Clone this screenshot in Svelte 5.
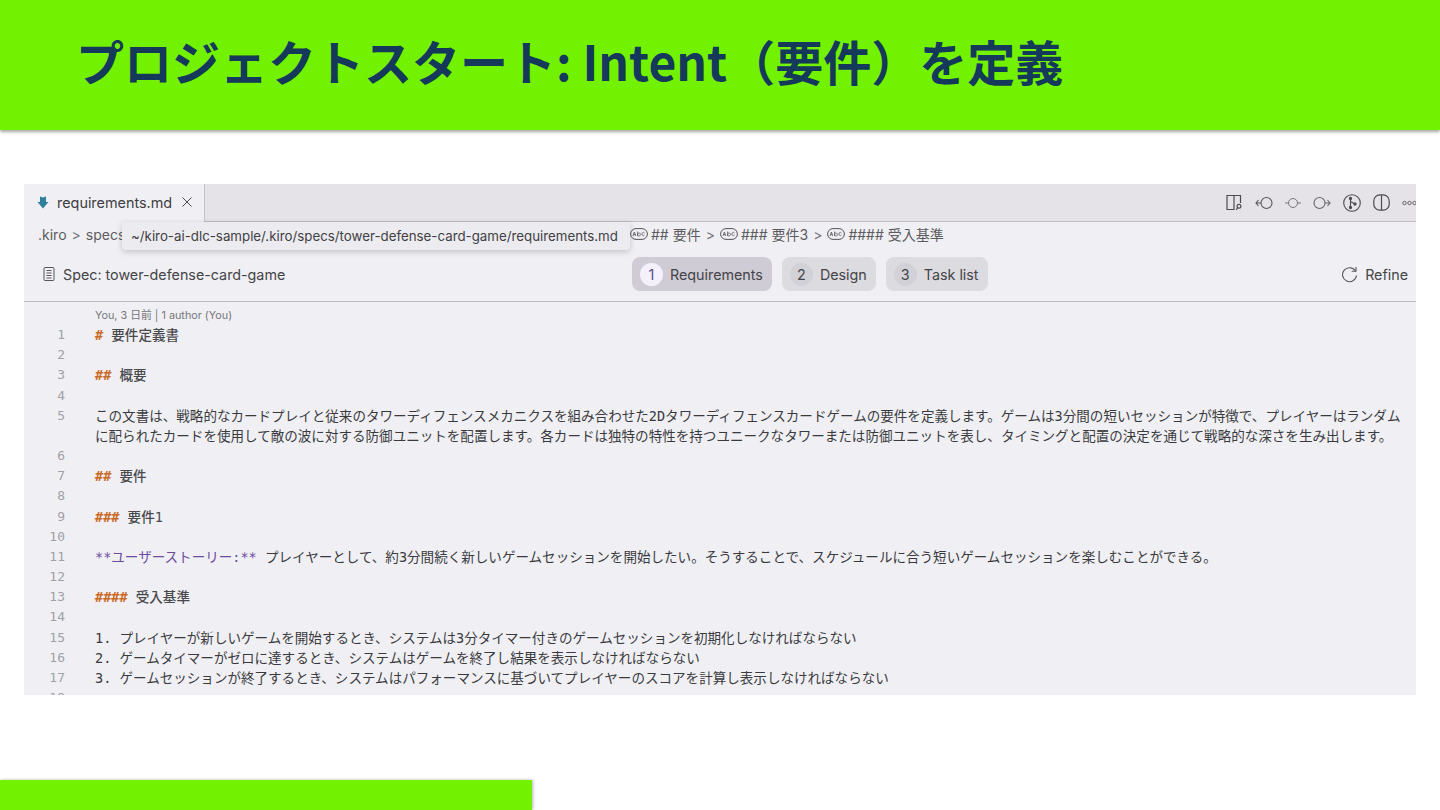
<script lang="ts">
  // Slide: Kiro spec editor screenshot under a green title band.
  type Part = { t: string; c?: string };
  interface Row {
    n: number | null;
    parts: Part[];
  }

  const plain = (t: string): Part[] => [{ t }];
  const head = (mark: string, t: string): Part[] => [
    { t: mark, c: 'mark' },
    { t: ' ' + t, c: 'head' }
  ];

  const rows: Row[] = [
    { n: 1, parts: head('#', '要件定義書') },
    { n: 2, parts: [] },
    { n: 3, parts: head('##', '概要') },
    { n: 4, parts: [] },
    {
      n: 5,
      parts: plain(
        'この文書は、戦略的なカードプレイと従来のタワーディフェンスメカニクスを組み合わせた2Dタワーディフェンスカードゲームの要件を定義します。ゲームは3分間の短いセッションが特徴で、プレイヤーはランダム'
      )
    },
    {
      n: null,
      parts: plain(
        'に配られたカードを使用して敵の波に対する防御ユニットを配置します。各カードは独特の特性を持つユニークなタワーまたは防御ユニットを表し、タイミングと配置の決定を通じて戦略的な深さを生み出します。'
      )
    },
    { n: 6, parts: [] },
    { n: 7, parts: head('##', '要件') },
    { n: 8, parts: [] },
    { n: 9, parts: head('###', '要件1') },
    { n: 10, parts: [] },
    {
      n: 11,
      parts: [
        { t: '**ユーザーストーリー:**', c: 'story' },
        { t: ' プレイヤーとして、約3分間続く新しいゲームセッションを開始したい。そうすることで、スケジュールに合う短いゲームセッションを楽しむことができる。' }
      ]
    },
    { n: 12, parts: [] },
    { n: 13, parts: head('####', '受入基準') },
    { n: 14, parts: [] },
    { n: 15, parts: plain('1. プレイヤーが新しいゲームを開始するとき、システムは3分タイマー付きのゲームセッションを初期化しなければならない') },
    { n: 16, parts: plain('2. ゲームタイマーがゼロに達するとき、システムはゲームを終了し結果を表示しなければならない') },
    { n: 17, parts: plain('3. ゲームセッションが終了するとき、システムはパフォーマンスに基づいてプレイヤーのスコアを計算し表示しなければならない') },
    { n: 18, parts: [] }
  ];

  const steps = [
    { n: 1, label: 'Requirements', active: true },
    { n: 2, label: 'Design', active: false },
    { n: 3, label: 'Task list', active: false }
  ];
</script>

{#snippet abc()}
  <svg class="abc" viewBox="0 0 18 12" width="18" height="12" fill="none" stroke="#55555a" stroke-width="1">
    <rect x="0.600" y="0.600" width="16.800" height="10.800" rx="5.400" />
    <path d="M3 8l1.400-4L5.800 8M3.600 6.600h1.600M7.600 3.500V8M7.600 6.400a1.400 1.500 0 1 1 0 .2M14.500 5a1.500 1.600 0 1 0 0 2" stroke-width="0.800" />
  </svg>
{/snippet}

<div class="slide">
  <header class="band">
    <h1>プロジェクトスタート: Intent（要件）を定義</h1>
  </header>

  <section class="window">
    <div class="tabs">
      <div class="tab">
        <svg viewBox="0 0 12 13" width="12" height="13" fill="#2f7f9c">
          <path d="M3 0.500L6 1.500 9 0.500V6H11.500L6 12.500 0.500 6H3z" />
        </svg>
        <span>requirements.md</span>
        <svg class="close" viewBox="0 0 10 10" width="10" height="10" stroke="#4a4a4e" stroke-width="1" fill="none">
          <path d="M0.500 0.500l9 9M9.500 0.500l-9 9" />
        </svg>
      </div>
      <div class="actions">
        <svg viewBox="0 0 17 17" width="17" height="17" fill="none" stroke="#4c4c50" stroke-width="1.200">
          <path d="M8.500 15.500H1V1.500h13.500V9M8 1.500v14" />
          <circle cx="13" cy="12.200" r="1.900" />
          <path d="M11.700 13.700L10.300 15.800" />
        </svg>
        <svg viewBox="0 0 18 14" width="18" height="14" fill="none" stroke="#55555a" stroke-width="1.100">
          <circle cx="11.500" cy="7" r="5.500" />
          <path d="M6 7H1M3.500 4L1 7l2.500 3" />
        </svg>
        <svg viewBox="0 0 16 14" width="16" height="14" fill="none" stroke="#77777c" stroke-width="1">
          <circle cx="8" cy="7" r="4.500" />
          <path d="M3.500 7H0M12.500 7H16" />
        </svg>
        <svg viewBox="0 0 18 14" width="18" height="14" fill="none" stroke="#66666b" stroke-width="1.100">
          <circle cx="6.500" cy="7" r="5.500" />
          <path d="M12 7h5M14.500 4L17 7l-2.500 3" />
        </svg>
        <svg viewBox="0 0 18 18" width="18" height="18" fill="none" stroke="#4c4c50" stroke-width="1.100">
          <circle cx="9" cy="9" r="8.300" />
          <path d="M7.500 4.500v9M7.500 7.500l4.500 2.500" />
          <circle cx="7.500" cy="4.500" r="1.100" fill="#4c4c50" />
          <circle cx="7.500" cy="13.500" r="1.100" fill="#4c4c50" />
          <circle cx="12" cy="10" r="1.100" fill="#4c4c50" />
        </svg>
        <svg viewBox="0 0 17 17" width="17" height="17" fill="none" stroke="#4c4c50" stroke-width="1.200">
          <rect x="0.800" y="0.800" width="15.400" height="15.400" rx="6" />
          <path d="M8.500 0.800v15.400" />
        </svg>
        <svg viewBox="0 0 15 6" width="15" height="6" fill="none" stroke="#66666b" stroke-width="1">
          <circle cx="2.500" cy="3" r="1.700" />
          <circle cx="7.500" cy="3" r="1.700" />
          <circle cx="12.500" cy="3" r="1.700" />
        </svg>
      </div>
    </div>

    <div class="crumbs">
      <div class="crumbs-start">.kiro<i>&gt;</i>specs</div>
      <div class="crumbs-end">
        {@render abc()}<span>## 要件</span><i>&gt;</i>
        {@render abc()}<span>### 要件3</span><i>&gt;</i>
        {@render abc()}<span>#### 受入基準</span>
      </div>
      <div class="tooltip">~/kiro-ai-dlc-sample/.kiro/specs/tower-defense-card-game/requirements.md</div>
    </div>

    <div class="specbar">
      <div class="spec-name">
        <svg viewBox="0 0 12 14" width="12" height="14" fill="none" stroke="#55555a" stroke-width="1">
          <rect x="1" y="0.500" width="10" height="13" rx="1" />
          <path d="M3.500 3.500h5M3.500 6h5M3.500 8.500h5M3.500 11h5" />
        </svg>
        <span>Spec: tower-defense-card-game</span>
      </div>
      <div class="steps">
        {#each steps as s}
          <div class="step" class:active={s.active}>
            <span class="num">{s.n}</span>
            <span>{s.label}</span>
          </div>
        {/each}
      </div>
      <div class="refine">
        <svg viewBox="0 0 17 17" width="17" height="17" fill="none" stroke="#55555a" stroke-width="1.100">
          <path d="M14.500 5A7 7 0 1 0 15.500 9.500" />
          <path d="M15 1V5.300H10.700" />
        </svg>
        <span>Refine</span>
      </div>
    </div>

    <div class="editor">
      <div class="lens">You, 3 日前 | 1 author (You)</div>
      {#each rows as row}
        <div class="row">
          <span class="ln">{row.n ?? ''}</span>
          <span class="code">{#each row.parts as p}<span class={p.c}>{p.t}</span>{/each}</span>
        </div>
      {/each}
    </div>
  </section>

  <div class="foot"></div>
</div>

<style>
  :global(body) {
    margin: 0;
    background: #fff;
  }
  .slide {
    width: 1440px;
    height: 810px;
    display: flex;
    flex-direction: column;
    overflow: hidden;
    background: #fff;
  }
  .band {
    height: 130px;
    flex: none;
    background: #72f100;
    box-shadow: 0 2px 3px rgba(0, 0, 0, 0.35);
    display: flex;
    align-items: center;
    padding-left: 76px;
  }
  h1 {
    margin: 0 0 10px;
    font: 700 48px 'Noto Sans CJK JP', sans-serif;
    color: #14395b;
    white-space: nowrap;
  }
  .window {
    margin: 54px 24px 0;
    height: 511px;
    flex: none;
    overflow: hidden;
    background: #f0f0f4;
    display: flex;
    flex-direction: column;
    font-family: Inter, 'Noto Sans CJK JP', sans-serif;
    color: #444448;
  }
  .tabs {
    height: 38px;
    flex: none;
    display: flex;
    justify-content: space-between;
    background: #e5e3e8;
    border-bottom: 1px solid #bdbcc0;
    box-sizing: border-box;
  }
  .tab {
    width: 181px;
    height: 38px;
    box-sizing: border-box;
    background: #f0f0f4;
    border-right: 1px solid #c4c3c8;
    display: flex;
    align-items: center;
    padding: 0 0 2px 13px;
    gap: 8px;
    font-size: 14.400px;
    color: #3d3d42;
  }
  .close {
    margin-left: 2px;
  }
  .actions {
    display: flex;
    align-items: center;
    gap: 12px;
    width: 190px;
    overflow: hidden;
    flex: none;
  }
  .actions svg {
    flex: none;
  }
  .crumbs {
    position: relative;
    height: 26px;
    flex: none;
    box-sizing: border-box;
    padding-bottom: 2px;
    display: flex;
    align-items: center;
    font-size: 14px;
    color: #5c5c60;
  }
  .crumbs i {
    font-style: normal;
    margin: 0 5px;
    color: #77777b;
  }
  .crumbs-start {
    width: 592px;
    padding-left: 14px;
    box-sizing: border-box;
    flex: none;
    white-space: nowrap;
  }
  .crumbs-end {
    display: flex;
    align-items: center;
    white-space: nowrap;
    margin-left: 14px;
  }
  .abc {
    margin-right: 3px;
    flex: none;
  }
  .tooltip {
    position: absolute;
    left: 98px;
    top: 0;
    width: 508px;
    height: 28px;
    box-sizing: border-box;
    padding-left: 9px;
    display: flex;
    align-items: center;
    background: #ecebef;
    border-radius: 0 0 4px 4px;
    box-shadow: 0 2px 6px rgba(0, 0, 0, 0.18);
    font-size: 13.300px;
    color: #3f3f44;
    white-space: nowrap;
  }
  .specbar {
    height: 54px;
    flex: none;
    box-sizing: border-box;
    border-bottom: 1px solid #bdbcc0;
    display: flex;
    align-items: center;
    font-size: 14.300px;
    padding: 0 8px 1px 0;
  }
  .spec-name {
    width: 608px;
    flex: none;
    box-sizing: border-box;
    padding-left: 19px;
    display: flex;
    align-items: center;
    gap: 8px;
  }
  .steps {
    display: flex;
    gap: 10px;
  }
  .step {
    height: 34px;
    display: flex;
    align-items: center;
    gap: 7px;
    padding: 0 9px 0 8px;
    border-radius: 8px;
    background: #dcdbe0;
  }
  .step.active {
    background: #cfccd5;
  }
  .num {
    width: 23px;
    height: 23px;
    border-radius: 50%;
    background: #d2d1d7;
    display: flex;
    align-items: center;
    justify-content: center;
  }
  .active .num {
    background: #f5f1fc;
    color: #5b4a8a;
  }
  .refine {
    margin-left: auto;
    display: flex;
    align-items: center;
    gap: 7px;
  }
  .editor {
    flex: 1;
    min-height: 0;
    overflow: hidden;
    padding-top: 7px;
    font-family: 'DejaVu Sans Mono', 'Noto Sans CJK JP', monospace;
  }
  .lens {
    height: 16px;
    padding-left: 71px;
    font: 10.800px/14px Inter, 'Noto Sans CJK JP', sans-serif;
    color: #77777b;
  }
  .row {
    display: flex;
    height: 20.180px;
    line-height: 20.180px;
    font-size: 13.550px;
    white-space: nowrap;
  }
  .ln {
    width: 41px;
    flex: none;
    text-align: right;
    font-size: 13px;
    color: #a0a0a5;
  }
  .code {
    margin-left: 30px;
    color: #3a3a3e;
  }
  .mark {
    color: #c96a26;
    font-style: italic;
    font-weight: 700;
  }
  .head {
    font-weight: 500;
    color: #4a4a4e;
  }
  .story {
    color: #6a4b9c;
  }
  .foot {
    margin-top: auto;
    width: 532px;
    height: 30px;
    flex: none;
    background: #72f100;
    box-shadow: 1px 0 3px rgba(0, 0, 0, 0.3);
  }
</style>
